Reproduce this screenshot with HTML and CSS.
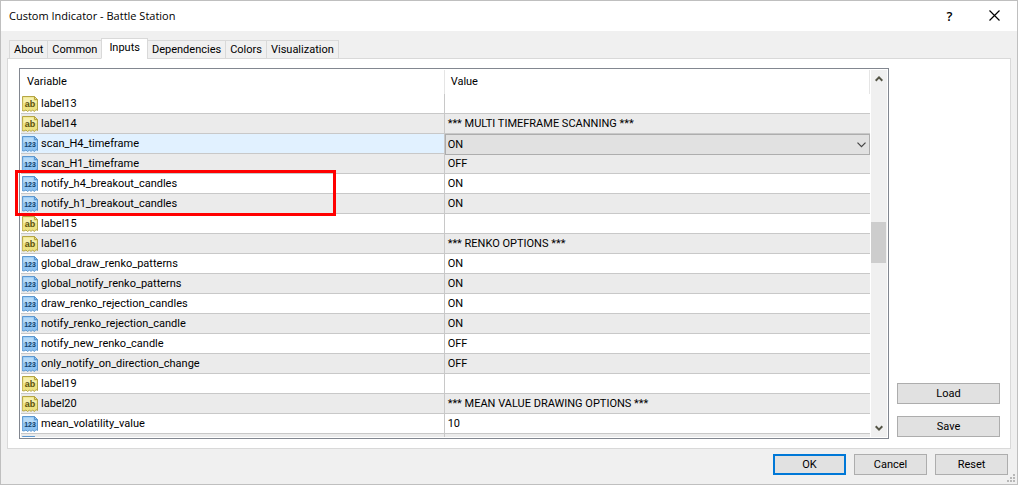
FILE: index.html
```html
<!DOCTYPE html>
<html lang="en">
<head>
<meta charset="utf-8">
<title>Custom Indicator - Battle Station</title>
<link rel="stylesheet" href="styles.css">
</head>
<body>
<svg class="defs" aria-hidden="true">
  <symbol id="sheet" viewBox="0 0 16 16">
    <path class="edge" d="M.5.5h12l3 3v11l-1.500-1-1.500 2-2-1.500-1.500 1.500-1.500-1.500-2 1.500-1.500-1.500-2 1-2-.5z"/>
    <path class="shine" d="M1.500 1.500h10v3.500h3v2H1.500z"/>
    <path class="fold" d="M12.500.5v3h3z"/>
  </symbol>
</svg>
<main class="window">
  <header class="titlebar">
    <h1 class="title">Custom Indicator - Battle Station</h1>
    <button class="caption" aria-label="Help">?</button>
    <button class="caption" aria-label="Close"><svg width="11" height="11" viewBox="0 0 11 11"><path d="M.5.5l10 10M10.500.5l-10 10" stroke="#000" stroke-width="1.200"/></svg></button>
  </header>
  <nav class="tabs" role="tablist">
    <button class="tab" role="tab">About</button>
    <button class="tab" role="tab">Common</button>
    <button class="tab selected" role="tab" aria-selected="true">Inputs</button>
    <button class="tab" role="tab">Dependencies</button>
    <button class="tab" role="tab">Colors</button>
    <button class="tab" role="tab">Visualization</button>
  </nav>
  <section class="panel">
    <div class="list-area">
      <div class="list">
        <div class="rows">
          <table class="grid">
            <thead><tr><th class="name-col">Variable</th><th>Value</th></tr></thead>
            <tbody>
              <tr><td><div class="name"><span class="icon str"><svg><use href="#sheet"/></svg><i>ab</i></span>label13</div></td><td></td></tr>
              <tr><td><div class="name"><span class="icon str"><svg><use href="#sheet"/></svg><i>ab</i></span>label14</div></td><td>*** MULTI TIMEFRAME SCANNING ***</td></tr>
              <tr class="active"><td><div class="name"><span class="icon num"><svg><use href="#sheet"/></svg><i>123</i></span><label for="h4">scan_H4_timeframe</label></div></td><td class="editor"><div class="combo"><select id="h4"><option>ON</option><option>OFF</option></select><svg class="drop" width="9" height="6" viewBox="0 0 9 6"><path d="M.5.7l4 4 4-4" fill="none" stroke="#444" stroke-width="1.200"/></svg></div></td></tr>
              <tr><td><div class="name"><span class="icon num"><svg><use href="#sheet"/></svg><i>123</i></span>scan_H1_timeframe</div></td><td>OFF</td></tr>
              <tr><td><div class="name"><span class="icon num"><svg><use href="#sheet"/></svg><i>123</i></span>notify_h4_breakout_candles</div></td><td>ON</td></tr>
              <tr><td><div class="name"><span class="icon num"><svg><use href="#sheet"/></svg><i>123</i></span>notify_h1_breakout_candles</div></td><td>ON</td></tr>
              <tr><td><div class="name"><span class="icon str"><svg><use href="#sheet"/></svg><i>ab</i></span>label15</div></td><td></td></tr>
              <tr><td><div class="name"><span class="icon str"><svg><use href="#sheet"/></svg><i>ab</i></span>label16</div></td><td>*** RENKO OPTIONS ***</td></tr>
              <tr><td><div class="name"><span class="icon num"><svg><use href="#sheet"/></svg><i>123</i></span>global_draw_renko_patterns</div></td><td>ON</td></tr>
              <tr><td><div class="name"><span class="icon num"><svg><use href="#sheet"/></svg><i>123</i></span>global_notify_renko_patterns</div></td><td>ON</td></tr>
              <tr><td><div class="name"><span class="icon num"><svg><use href="#sheet"/></svg><i>123</i></span>draw_renko_rejection_candles</div></td><td>ON</td></tr>
              <tr><td><div class="name"><span class="icon num"><svg><use href="#sheet"/></svg><i>123</i></span>notify_renko_rejection_candle</div></td><td>ON</td></tr>
              <tr><td><div class="name"><span class="icon num"><svg><use href="#sheet"/></svg><i>123</i></span>notify_new_renko_candle</div></td><td>OFF</td></tr>
              <tr><td><div class="name"><span class="icon num"><svg><use href="#sheet"/></svg><i>123</i></span>only_notify_on_direction_change</div></td><td>OFF</td></tr>
              <tr><td><div class="name"><span class="icon str"><svg><use href="#sheet"/></svg><i>ab</i></span>label19</div></td><td></td></tr>
              <tr><td><div class="name"><span class="icon str"><svg><use href="#sheet"/></svg><i>ab</i></span>label20</div></td><td>*** MEAN VALUE DRAWING OPTIONS ***</td></tr>
              <tr><td><div class="name"><span class="icon num"><svg><use href="#sheet"/></svg><i>123</i></span>mean_volatility_value</div></td><td>10</td></tr>
              <tr><td><div class="name"><span class="icon num"><svg><use href="#sheet"/></svg></span></div></td><td></td></tr>
            </tbody>
          </table>
        </div>
        <div class="scrollbar">
          <svg class="arrow" width="8" height="6" viewBox="0 0 8 6"><path d="M.7 4.700L4 1.400l3.300 3.300" fill="none" stroke="#555546" stroke-width="2"/></svg>
          <div class="track"><div class="thumb"></div></div>
          <svg class="arrow" width="8" height="6" viewBox="0 0 8 6"><path d="M.7 1.300L4 4.600l3.300-3.300" fill="none" stroke="#555546" stroke-width="2"/></svg>
        </div>
      </div>
      <div class="highlight"></div>
    </div>
    <div class="side">
      <button class="button">Load</button>
      <button class="button">Save</button>
    </div>
  </section>
  <footer class="actions">
    <button class="button primary">OK</button>
    <button class="button">Cancel</button>
    <button class="button">Reset</button>
    <svg class="grip" width="8" height="8" viewBox="0 0 8 8" fill="#b8b8b8"><path d="M6 0h2v2H6zM6 3h2v2H6zM6 6h2v2H6zM3 3h2v2H3zM3 6h2v2H3zM0 6h2v2H0z"/></svg>
  </footer>
</main>
</body>
</html>
```
FILE: styles.css
```css
* { box-sizing: border-box; }
body {
  margin: 0;
  font: 11px/16px Roboto, "Liberation Sans", sans-serif;
  color: #000;
}
button, select { font: inherit; color: inherit; border-radius: 0; margin: 0; }
.defs { position: absolute; width: 0; height: 0; }
.window {
  height: 100vh;
  display: flex;
  flex-direction: column;
  background: #f0f0f0;
  border: 1px solid #bfbfbf;
}
.titlebar {
  display: flex;
  align-items: center;
  height: 30px;
  padding-left: 8px;
  background: #fff;
}
.title {
  flex: 1;
  margin: 0;
  font: 11px/16px "Open Sans", "Noto Sans", sans-serif;
}
.caption {
  width: 45px;
  height: 28px;
  padding: 0;
  border: 0;
  background: none;
  font: 600 13px/16px "Open Sans", sans-serif;
}
.tabs {
  display: flex;
  align-items: flex-end;
  height: 28px;
  padding-left: 8px;
  position: relative;
  z-index: 1;
  margin-bottom: -1px;
}
.tab {
  height: 19px;
  padding: 0 4px;
  margin-right: -1px;
  border: 1px solid #d9d9d9;
  background: #f0f0f0;
}
.tab.selected {
  height: 21px;
  padding: 0 7px 2px;
  background: #fff;
  border-bottom-color: #fff;
}
.panel {
  flex: 1;
  min-height: 0;
  display: flex;
  gap: 8px;
  margin: 0 6px;
  padding: 9px 10px 9px 11px;
  background: #fff;
  border: 1px solid #d9d9d9;
}
.list-area { flex: 1; position: relative; min-width: 0; }
.list {
  display: flex;
  height: 100%;
  padding: 1px;
  border: 1px solid #828790;
}
.rows { flex: 1; min-width: 0; overflow: hidden; }
.grid {
  width: 100%;
  table-layout: fixed;
  border-collapse: separate;
  border-spacing: 0;
}
th {
  height: 24px;
  padding: 0 6px;
  text-align: left;
  font-weight: 400;
  border-right: 1px solid #e5e5e5;
}
.name-col { width: 49.9%; }
td {
  height: 20px;
  padding: 0 3px;
  border-bottom: 1px solid #c8c8c8;
  white-space: nowrap;
}
td:first-child { padding: 0 0 0 1px; border-right: 1px solid #c8c8c8; }
tbody tr:nth-child(even) { background: #ebebeb; }
tbody tr.active { background: #e1f1ff; }
.name { display: flex; align-items: center; gap: 3px; }
.icon {
  display: grid;
  width: 16px;
  height: 16px;
  --edge: #b5a544;
  --fill: #ede282;
  --shine: #f6f0ae;
  --ink: #5b5210;
  color: var(--ink);
}
.icon.num {
  --edge: #5c97cf;
  --fill: #8dc3f2;
  --shine: #b5daf8;
  --ink: #123f68;
}
.icon svg, .icon i { grid-area: 1 / 1; width: 16px; height: 16px; }
.icon i {
  z-index: 1;
  text-align: center;
  font: 700 9px/16px "Liberation Sans", sans-serif;
}
.icon.num i { font: 700 7px/18px "Liberation Sans", sans-serif; }
.edge { fill: var(--fill); stroke: var(--edge); }
.shine { fill: var(--shine); }
.fold { fill: var(--fill); stroke: var(--edge); }
td.editor { padding: 0; border: 0; }
.combo { position: relative; height: 21px; margin-bottom: -1px; }
.combo select {
  display: block;
  width: 100%;
  height: 21px;
  padding: 0 2px;
  appearance: none;
  border: 1px solid #adadad;
  background: #e1e1e1;
}
.drop { position: absolute; right: 4px; top: 8px; }
.scrollbar {
  width: 16px;
  margin-left: 1px;
  padding: 6px 0;
  display: flex;
  flex-direction: column;
  align-items: center;
  background: #f0f0f0;
}
.track { flex: 1; width: 100%; padding: 140px 1px 0 0; }
.thumb { height: 41px; background: #cdcdcd; }
.highlight {
  position: absolute;
  left: -4px;
  top: 102px;
  width: 321px;
  height: 46px;
  border: 3px solid #f00;
}
.side {
  width: 103px;
  display: flex;
  flex-direction: column;
  justify-content: flex-end;
  gap: 12px;
  padding-bottom: 2px;
}
.button {
  height: 21px;
  padding: 0;
  border: 1px solid #adadad;
  background: #e1e1e1;
}
.actions {
  position: relative;
  display: flex;
  justify-content: flex-end;
  gap: 8px;
  padding: 5px 9px 9px;
}
.actions .button { width: 73px; }
.button.primary { border: 2px solid #0078d7; }
.grip { position: absolute; right: 2px; bottom: 2px; }
```
